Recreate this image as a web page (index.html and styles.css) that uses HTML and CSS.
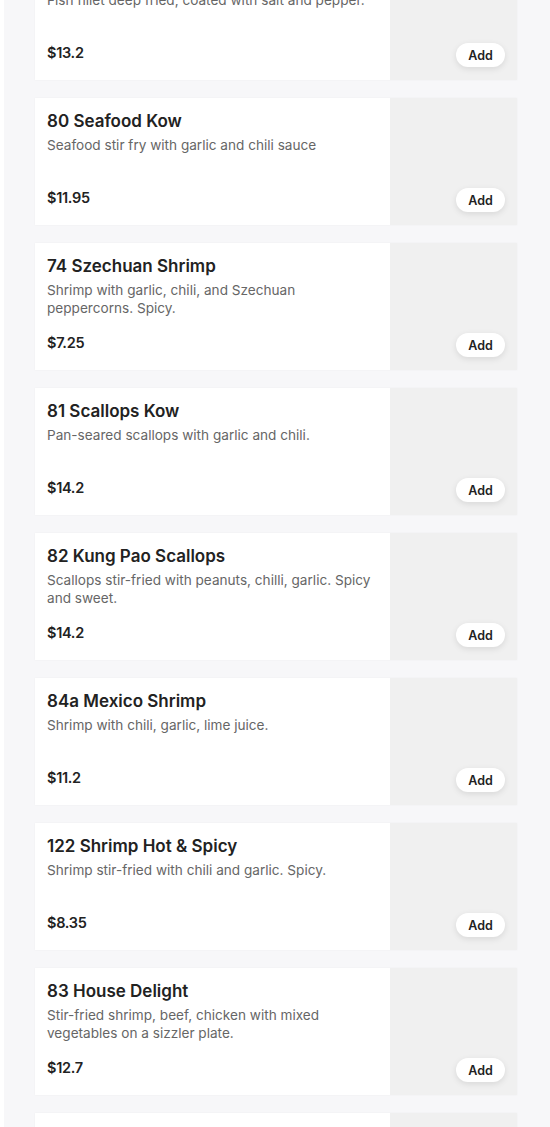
FILE: index.html
```html
<!DOCTYPE html>
<html lang="en">
<head>
  <meta charset="UTF-8" />
  <meta name="viewport" content="width=device-width, initial-scale=1.0"/>
  <title>Menu - Seafood</title>
  <link rel="stylesheet" href="styles.css">
</head>
<body>
  <div class="menu">
    <div class="item">
      <div class="info">
        <h3>79 Salt &amp; Pepper Fish</h3>
        <p class="desc">Fish fillet deep fried, coated with salt and pepper.</p>
        <p class="price">$13.2</p>
      </div>
      <div class="thumb"><button class="add">Add</button></div>
    </div>
    <div class="item">
      <div class="info">
        <h3>80 Seafood Kow</h3>
        <p class="desc">Seafood stir fry with garlic and chili sauce</p>
        <p class="price">$11.95</p>
      </div>
      <div class="thumb"><button class="add">Add</button></div>
    </div>
    <div class="item">
      <div class="info">
        <h3>74 Szechuan Shrimp</h3>
        <p class="desc">Shrimp with garlic, chili, and Szechuan peppercorns. Spicy.</p>
        <p class="price">$7.25</p>
      </div>
      <div class="thumb"><button class="add">Add</button></div>
    </div>
    <div class="item">
      <div class="info">
        <h3>81 Scallops Kow</h3>
        <p class="desc">Pan-seared scallops with garlic and chili.</p>
        <p class="price">$14.2</p>
      </div>
      <div class="thumb"><button class="add">Add</button></div>
    </div>
    <div class="item">
      <div class="info">
        <h3>82 Kung Pao Scallops</h3>
        <p class="desc">Scallops stir-fried with peanuts, chilli, garlic. Spicy and sweet.</p>
        <p class="price">$14.2</p>
      </div>
      <div class="thumb"><button class="add">Add</button></div>
    </div>
    <div class="item">
      <div class="info">
        <h3>84a Mexico Shrimp</h3>
        <p class="desc">Shrimp with chili, garlic, lime juice.</p>
        <p class="price">$11.2</p>
      </div>
      <div class="thumb"><button class="add">Add</button></div>
    </div>
    <div class="item">
      <div class="info">
        <h3>122 Shrimp Hot &amp; Spicy</h3>
        <p class="desc">Shrimp stir-fried with chili and garlic. Spicy.</p>
        <p class="price">$8.35</p>
      </div>
      <div class="thumb"><button class="add">Add</button></div>
    </div>
    <div class="item">
      <div class="info">
        <h3>83 House Delight</h3>
        <p class="desc">Stir-fried shrimp, beef, chicken with mixed vegetables on a sizzler plate.</p>
        <p class="price">$12.7</p>
      </div>
      <div class="thumb"><button class="add">Add</button></div>
    </div>
    <div class="item">
      <div class="info"></div>
      <div class="thumb"></div>
    </div>
  </div>
</body>
</html>
```

FILE: styles.css
```css
body {
  margin: 0;
  font-family: Inter, "Noto Sans", sans-serif;
  background-color: #ffffff;
  overflow: hidden;
}
.menu {
  margin-left: 4px;
  margin-top: -47px;
  padding: 0 33px 0 31px;
  background-color: #f7f7f9;
  display: flex;
  flex-direction: column;
  gap: 18px;
}
.item {
  display: flex;
  height: 127px;
  background: white;
  box-shadow: 0 0 2px rgba(0,0,0,0.04);
}
.info {
  flex: 1;
  display: flex;
  flex-direction: column;
  padding: 12px 12px 0 12px;
}
.info h3 {
  margin: 0;
  font-size: 17px;
  line-height: 22px;
  font-weight: 600;
  color: #222;
}
.desc {
  margin: 4px 0 0;
  font-size: 13.6px;
  line-height: 18px;
  color: #666;
}
.price {
  margin: auto 0 0;
  padding-bottom: 17px;
  font-size: 14.5px;
  line-height: 20px;
  font-weight: 600;
  letter-spacing: -0.3px;
  color: #222;
}
.thumb {
  width: 127px;
  background-color: #f0f0f0;
  display: flex;
  align-items: flex-end;
  justify-content: flex-end;
  padding: 0 12px 13px 0;
  box-sizing: border-box;
}
.add {
  height: 24px;
  width: 49px;
  border: none;
  border-radius: 12px;
  background: white;
  color: #222;
  font-family: inherit;
  font-size: 12.5px;
  font-weight: 600;
  box-shadow: 0 2px 6px rgba(0,0,0,0.1);
  cursor: pointer;
}
```
